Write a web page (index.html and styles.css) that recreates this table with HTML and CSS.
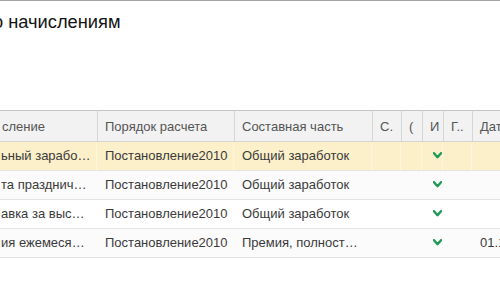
FILE: index.html
```html
<!DOCTYPE html>
<html lang="ru">
<head>
<meta charset="utf-8">
<title>По начислениям</title>
<link rel="stylesheet" href="styles.css">
</head>
<body>
<div class="page">
  <h1 class="title">по начислениям</h1>
  <div class="grid-wrap">
    <div class="grid">
      <div class="hd first">сление</div>
      <div class="hd">Порядок расчета</div>
      <div class="hd">Составная часть</div>
      <div class="hd">С.</div>
      <div class="hd">(</div>
      <div class="hd">И</div>
      <div class="hd">Г..</div>
      <div class="hd">Дата</div>

      <div class="cell first sel">ьный зарабо…</div>
      <div class="cell sel">Постановление2010</div>
      <div class="cell sel">Общий заработок</div>
      <div class="cell sel"></div>
      <div class="cell sel"></div>
      <div class="cell sel chk"><svg class="tick" viewBox="0 0 9 7" width="9" height="7"><polyline points="1,1.2 4.5,5.2 8,1.2"/></svg></div>
      <div class="cell sel"></div>
      <div class="cell sel"></div>

      <div class="cell first alt">та празднич…</div>
      <div class="cell alt">Постановление2010</div>
      <div class="cell alt">Общий заработок</div>
      <div class="cell alt"></div>
      <div class="cell alt"></div>
      <div class="cell alt chk"><svg class="tick" viewBox="0 0 9 7" width="9" height="7"><polyline points="1,1.2 4.5,5.2 8,1.2"/></svg></div>
      <div class="cell alt"></div>
      <div class="cell alt"></div>

      <div class="cell first">авка за выс…</div>
      <div class="cell">Постановление2010</div>
      <div class="cell">Общий заработок</div>
      <div class="cell"></div>
      <div class="cell"></div>
      <div class="cell chk"><svg class="tick" viewBox="0 0 9 7" width="9" height="7"><polyline points="1,1.2 4.5,5.2 8,1.2"/></svg></div>
      <div class="cell"></div>
      <div class="cell"></div>

      <div class="cell first alt">ия ежемеся…</div>
      <div class="cell alt">Постановление2010</div>
      <div class="cell alt">Премия, полност…</div>
      <div class="cell alt"></div>
      <div class="cell alt"></div>
      <div class="cell alt chk"><svg class="tick" viewBox="0 0 9 7" width="9" height="7"><polyline points="1,1.2 4.5,5.2 8,1.2"/></svg></div>
      <div class="cell alt"></div>
      <div class="cell alt">01.10.2010</div>
    </div>
  </div>
</div>
</body>
</html>
```
FILE: styles.css
```css
* { box-sizing: border-box; }
html, body { margin: 0; padding: 0; background: #ffffff; }
body {
  width: 500px;
  height: 281px;
  overflow: hidden;
  font-family: "Liberation Sans", Arial, sans-serif;
}
.page {
  border-top: 1px solid #a3a3a3;
  height: 281px;
}
.title {
  margin: 11px 0 0 -17px;
  font-size: 18.3px;
  line-height: 20px;
  font-weight: normal;
  color: #141414;
  white-space: nowrap;
}
.grid-wrap {
  margin-top: 78px;
  width: 500px;
  overflow: hidden;
}
.grid {
  display: grid;
  grid-template-columns: 97px 137px 138px 29px 21px 21px 29px 60px;
  width: 532px;
  font-size: 13px;
}
.hd {
  height: 32px;
  border-top: 1px solid #c4c4c4;
  border-bottom: 1px solid #d4d4d4;
  border-left: 1px solid #d6d6d6;
  background: #f2f2f2;
  color: #555555;
  padding: 0 0 0 7px;
  display: flex;
  align-items: center;
  white-space: nowrap;
  overflow: hidden;
}
.hd.first { border-left: none; padding-left: 2px; }
.cell {
  height: 29px;
  border-bottom: 1px solid #e3e3e3;
  color: #3a3a3a;
  padding: 0 0 0 8px;
  display: block;
  line-height: 28px;
  white-space: nowrap;
  overflow: hidden;
  background: #ffffff;
}
.cell.first { padding-left: 1px; }
.cell.alt { background: #fbfbfb; }
.cell.sel {
  background: #fbf0c9;
  border-right: 1px solid #fcf5dc;
}
.cell.chk {
  display: flex;
  align-items: center;
  justify-content: center;
  padding: 0 0 2px 10px;
}
.tick {
  fill: none;
  stroke: #1f9a57;
  stroke-width: 2.4;
  stroke-linecap: round;
  stroke-linejoin: round;
}
```
